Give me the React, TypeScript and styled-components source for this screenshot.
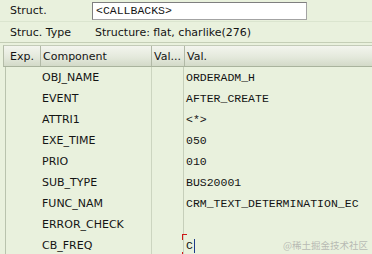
import React from "react";
import styled, { createGlobalStyle } from "styled-components";

const Global = createGlobalStyle`
  html, body { margin: 0; padding: 0; background: #e9f1dd; }
  body { font-family: "DejaVu Sans", Tahoma, sans-serif; font-size: 11px; color: #141414; }
`;

const Page = styled.div`
  position: relative;
  width: 372px;
  height: 254px;
  overflow: hidden;
  background: #e9f1dd;
`;

const FieldRow = styled.div<{ $h: number }>`
  display: flex;
  align-items: center;
  height: ${(p) => p.$h}px;
  border-bottom: 1px solid ${(p) => (p.$h > 20 ? "#dbe5cf" : "#c4ceb6")};
`;

const Label = styled.div`
  width: 82px;
  padding-left: 10px;
  white-space: nowrap;
`;

const Input = styled.div`
  box-sizing: border-box;
  width: 215px;
  height: 18px;
  margin-top: 1px;
  background: #ffffff;
  border: 1px solid #a3a3a3;
  border-top-color: #7f7f7f;
  border-left-color: #7f7f7f;
  font-family: "Liberation Mono", "Courier New", monospace;
  font-size: 11.5px;
  line-height: 16px;
  padding-left: 3px;
`;

const TypeText = styled.div`
  padding-left: 3px;
  white-space: nowrap;
`;

const Table = styled.div`
  margin: 2px 0 0 3px;
`;

const Cols = "37px 111px 33px 1fr";

const Header = styled.div`
  box-sizing: border-box;
  display: grid;
  grid-template-columns: ${Cols};
  height: 22px;
  border-top: 1px solid #c3cbb8;
  border-bottom: 1px solid #a9b39d;
  border-left: 1px solid #b4bca8;
  background: linear-gradient(#f3f5ee, #e4e9dc 55%, #d3dac8);
`;

const HeadCell = styled.div<{ $pad: number }>`
  display: flex;
  align-items: center;
  padding-left: ${(p) => p.$pad}px;
  border-right: 1px solid #b1b9a6;
  white-space: nowrap;
  &:last-child { border-right: none; }
`;

const Row = styled.div`
  display: grid;
  grid-template-columns: ${Cols};
  height: 21px;
`;

const ExpCell = styled.div`
  margin-left: 2px;
  border-left: 1px solid #b9c3ad;
`;

const NameCell = styled.div`
  display: flex;
  align-items: center;
  padding-left: 2px;
  white-space: nowrap;
`;

const EmptyCell = styled.div`
  border-left: 1px solid #ccd5c0;
  border-right: 1px solid #c6cfba;
`;

const ValCell = styled.div`
  position: relative;
  display: flex;
  align-items: center;
  padding-left: 2px;
  font-family: "Liberation Mono", "Courier New", monospace;
  font-size: 11.5px;
  white-space: nowrap;
`;

const Corner = styled.span<{ $top: boolean }>`
  position: absolute;
  left: -2px;
  ${(p) => (p.$top ? "top: -1px;" : "bottom: -1px;")}
  width: 4px;
  height: 5px;
  border-left: 1px solid #d01818;
  ${(p) => (p.$top ? "border-top: 1px solid #d01818;" : "")}
`;

const Caret = styled.span`
  display: inline-block;
  width: 1px;
  height: 14px;
  margin-left: 1px;
  background: #1d3a8a;
`;

const Watermark = styled.div`
  position: absolute;
  right: 4px;
  bottom: 2px;
  font-family: "Noto Sans CJK SC", sans-serif;
  font-size: 9.5px;
  color: rgba(160, 160, 160, 0.7);
  white-space: nowrap;
`;

const rows: [string, string][] = [
  ["OBJ_NAME", "ORDERADM_H"],
  ["EVENT", "AFTER_CREATE"],
  ["ATTRI1", "<*>"],
  ["EXE_TIME", "050"],
  ["PRIO", "010"],
  ["SUB_TYPE", "BUS20001"],
  ["FUNC_NAM", "CRM_TEXT_DETERMINATION_EC"],
  ["ERROR_CHECK", ""],
  ["CB_FREQ", "C"],
];

export default function App() {
  return (
    <Page>
      <Global />
      <FieldRow $h={21}>
        <Label>Struct.</Label>
        <Input>&lt;CALLBACKS&gt;</Input>
      </FieldRow>
      <FieldRow $h={20}>
        <Label>Struc. Type</Label>
        <TypeText>Structure: flat, charlike(276)</TypeText>
      </FieldRow>
      <Table>
        <Header>
          <HeadCell $pad={6}>Exp.</HeadCell>
          <HeadCell $pad={2}>Component</HeadCell>
          <HeadCell $pad={2}>Val...</HeadCell>
          <HeadCell $pad={2}>Val.</HeadCell>
        </Header>
        {rows.map(([name, val], i) => {
          const focused = i === rows.length - 1;
          return (
            <Row key={name}>
              <ExpCell />
              <NameCell>{name}</NameCell>
              <EmptyCell />
              <ValCell>
                {focused && <Corner $top />}
                {focused && <Corner $top={false} />}
                {val}
                {focused && <Caret />}
              </ValCell>
            </Row>
          );
        })}
      </Table>
      <Watermark>@稀土掘金技术社区</Watermark>
    </Page>
  );
}
